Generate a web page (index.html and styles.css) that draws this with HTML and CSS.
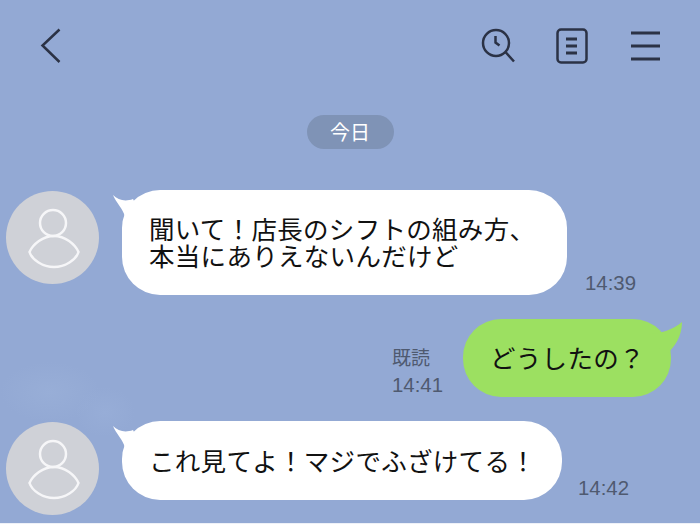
FILE: index.html
```html
<!DOCTYPE html>
<html lang="ja">
<head>
	<meta charset="UTF-8">
	<title>トーク</title>
	<link rel="stylesheet" href="styles.css">
</head>
<body>
<div class="screen">
	<div class="topbar">
		<svg class="back" width="22" height="36" viewBox="0 0 22 36">
			<path d="M19.500 2.500 2.500 18.500 19.500 35"/>
		</svg>
		<div class="tools">
			<svg width="38" height="38" viewBox="0 0 38 38">
				<circle cx="16" cy="16" r="13"/>
				<path d="M15.500 9V15.500L19.500 18.500M25.500 25 34 34.500"/>
			</svg>
			<svg width="38" height="38" viewBox="0 0 38 38">
				<rect x="2.500" y="2.500" width="29" height="33" rx="3.500"/>
				<path class="thick" d="M11 12H22M11 19H22M11 26H22"/>
			</svg>
			<svg class="menu" width="32" height="32" viewBox="0 0 32 32">
				<path class="thick" d="M1 3H30M1 16H30M1 29H30"/>
			</svg>
		</div>
	</div>

	<div class="date"><span>今日</span></div>

	<div class="row first">
		<svg class="avatar" width="93" height="93" viewBox="0 0 93 93">
			<circle class="face" cx="46.500" cy="46.500" r="46.500"/>
			<circle class="line" cx="47" cy="32" r="13"/>
			<path class="line" d="M48 45C37 45 27 53 23.500 61C26 69 37 76 48 76C59 76 70 69 72.500 61C69 53 59 45 48 45Z"/>
		</svg>
		<div class="bubble tall">
			<svg class="tail" width="24" height="22" viewBox="0 0 24 22">
				<path d="M0 0C5 5 12 7 20 4L24 12 12 22C10 13 3 8 0 0Z"/>
			</svg>
			<p>聞いて！店長のシフトの組み方、<br>本当にありえないんだけど</p>
		</div>
		<div class="time">14:39</div>
	</div>

	<div class="row mine">
		<div class="meta">
			<div class="read">既読</div>
			<div class="time">14:41</div>
		</div>
		<div class="bubble green">
			<svg class="tail-right" width="36" height="34" viewBox="0 0 36 34">
				<path d="M0 12C10 12 24 8 33 0C33 14 26 25 16 34Z"/>
			</svg>
			<p>どうしたの？</p>
		</div>
	</div>

	<div class="row last">
		<svg class="avatar" width="93" height="93" viewBox="0 0 93 93">
			<circle class="face" cx="46.500" cy="46.500" r="46.500"/>
			<circle class="line" cx="47" cy="32" r="13"/>
			<path class="line" d="M48 45C37 45 27 53 23.500 61C26 69 37 76 48 76C59 76 70 69 72.500 61C69 53 59 45 48 45Z"/>
		</svg>
		<div class="bubble short">
			<svg class="tail" width="24" height="22" viewBox="0 0 24 22">
				<path d="M0 0C5 5 12 7 20 4L24 12 12 22C10 13 3 8 0 0Z"/>
			</svg>
			<p>これ見てよ！マジでふざけてる！</p>
		</div>
		<div class="time">14:42</div>
	</div>
</div>
</body>
</html>
```
FILE: styles.css
```css
html, body{
	margin: 0;
	background: #eef1f8;
}
.screen{
	width: 700px;
	height: 523px;
	overflow: hidden;
	background:
		radial-gradient(ellipse 50px 30px at 50px 392px, #98aed7, transparent),
		radial-gradient(ellipse 30px 25px at 105px 412px, #97add7, transparent),
		#93a9d4;
	font-family: "Noto Sans CJK JP", "Liberation Sans", sans-serif;
}
svg{
	display: block;
	flex: none;
	fill: none;
	stroke: #2b3245;
	stroke-width: 2.500;
}
.topbar{
	display: flex;
	justify-content: space-between;
	align-items: flex-start;
	height: 115px;
	box-sizing: border-box;
	padding: 27px 38px 0 40px;
}
.tools{
	display: flex;
	align-items: flex-start;
	gap: 37px;
}
.menu{
	margin-top: 3px;
}
.thick{
	stroke-width: 3;
}
.date{
	display: flex;
	justify-content: center;
	height: 34px;
}
.date span{
	width: 87px;
	line-height: 33px;
	border-radius: 17px;
	background: #7f93b6;
	color: #fff;
	font-size: 20px;
	text-align: center;
}
.row{
	display: flex;
	align-items: flex-start;
}
.first{
	margin-top: 41px;
	padding-left: 6px;
}
.mine{
	justify-content: flex-end;
	margin-top: 24px;
	padding-right: 29px;
}
.last{
	margin-top: 24px;
	padding-left: 6px;
}
.avatar{
	margin-top: 1px;
}
.face{
	fill: #cfd1d7;
	stroke: none;
}
.line{
	stroke: #f6f6f8;
	stroke-width: 2.500;
}
.bubble{
	position: relative;
	display: flex;
	align-items: center;
	box-sizing: border-box;
	border-radius: 38px;
	background: #fff;
	color: #111;
	font-size: 25.500px;
	line-height: 27px;
	letter-spacing: .3px;
}
.bubble p{
	margin: 0;
}
.tall{
	width: 445px;
	height: 105px;
	margin-left: 23px;
	padding: 0 0 4px 27px;
}
.short{
	width: 440px;
	height: 79px;
	margin-left: 23px;
	padding: 0 0 3px 27px;
}
.green{
	width: 208px;
	height: 78px;
	margin-left: 20px;
	padding: 0 0 4px 27px;
	background: #9ce061;
}
.tail, .tail-right{
	position: absolute;
	stroke: none;
}
.tail{
	left: -9px;
	top: 5px;
	fill: #fff;
}
.tail-right{
	right: -14px;
	top: 3px;
	fill: #9ce061;
}
.time{
	color: #4f5a70;
	font-family: "Liberation Sans", sans-serif;
	font-size: 20.400px;
	line-height: 24px;
}
.first .time{
	margin: 81px 0 0 18px;
}
.last .time{
	margin: 55px 0 0 16px;
}
.meta{
	display: flex;
	flex-direction: column;
	align-items: flex-start;
	padding-top: 25px;
	gap: 3px;
}
.read{
	color: #4f5a70;
	font-size: 19px;
	line-height: 26px;
}
```
